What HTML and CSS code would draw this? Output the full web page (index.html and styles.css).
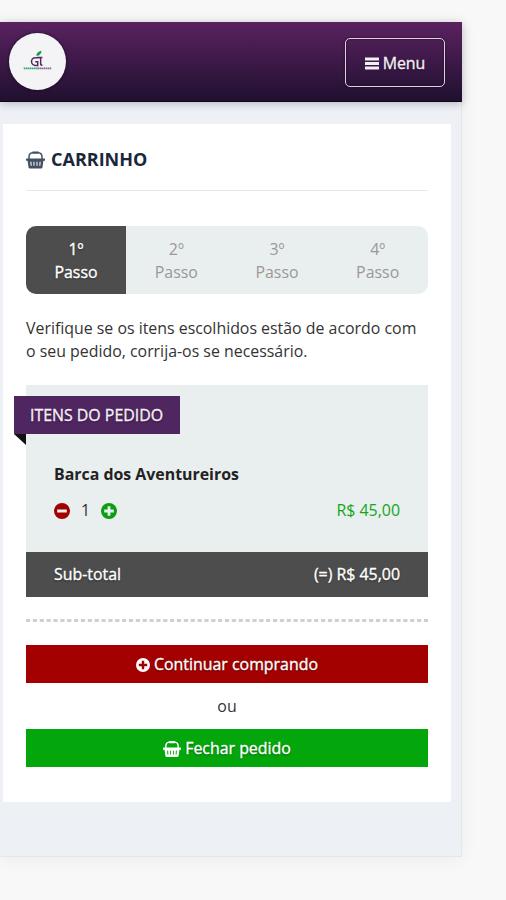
FILE: index.html
```html
<!DOCTYPE html>
<html lang="pt-BR">
<head>
<meta charset="utf-8">
<title>Carrinho</title>
<link rel="stylesheet" href="styles.css">
</head>
<body>
<svg class="defs" width="0" height="0" aria-hidden="true">
  <symbol id="basket" viewBox="0 0 19 18">
    <path d="M3 8V5.500Q3.200 2 6.500 1.700M16 8V5.500Q15.800 2 12.500 1.700" fill="none" stroke="currentColor" stroke-width="1.500"/>
    <rect x="6" y=".5" width="7" height="2.300" rx="1" fill="currentColor"/>
    <path fill="currentColor" fill-rule="evenodd" d="M.8 7.500h17.400a.8.8 0 0 1 0 2.300h-.8L16.500 16.200q-.2 1.300-1.400 1.300H3.900q-1.200 0-1.400-1.300L1.600 9.800H.8a.8.8 0 0 1 0-2.300ZM4.300 10.800l.4 4h1l-.3-4ZM7.500 10.800v4h1v-4ZM10.500 10.800v4h1v-4ZM13.600 10.800l-.3 4h1l.4-4Z"/>
  </symbol>
  <symbol id="plus" viewBox="0 0 16 16">
    <path fill="currentColor" fill-rule="evenodd" d="M8 0a8 8 0 1 0 0 16A8 8 0 0 0 8 0ZM6.600 3.200h2.800v3.400h3.400v2.800H9.400v3.400H6.600V9.400H3.200V6.600h3.400Z"/>
  </symbol>
  <symbol id="minus" viewBox="0 0 16 16">
    <path fill="currentColor" fill-rule="evenodd" d="M8 0a8 8 0 1 0 0 16A8 8 0 0 0 8 0ZM3.200 6.600h9.600v2.800H3.200Z"/>
  </symbol>
</svg>
<div class="page">
  <header class="topbar">
    <div class="logo">
      <svg viewBox="0 0 58 58" width="57" height="57">
        <path d="M28 23.500c-.5-3 1.800-5 5-5.500 0 3-1.600 5-5 5.500Z" fill="#16a34c"/>
        <path d="M31 25.200h-4.200a3.900 3.900 0 0 0 0 7.800h2.400v-3.700h-2.500M29 25h5M32.200 25.200v5.800q0 1.900 1.800 1.900" fill="none" stroke="#552860" stroke-width="1.500"/>
        <path d="M15 36h14" stroke="#31ad6b" stroke-width="2" stroke-dasharray="1.700 .4"/>
        <path d="M29 36h14" stroke="#866b91" stroke-width="1.800" stroke-dasharray="1.700 .4"/>
      </svg>
    </div>
    <button class="menu"><svg class="bars" viewBox="0 0 14 12"><path d="M0 1.500h14M0 6h14M0 10.500h14" stroke="currentColor" stroke-width="2.800"/></svg><span>Menu</span></button>
  </header>
  <main class="card">
    <h1><svg class="i-title"><use href="#basket"/></svg><span>CARRINHO</span></h1>
    <ol class="steps">
      <li class="active">1º<br>Passo</li>
      <li>2º<br>Passo</li>
      <li>3º<br>Passo</li>
      <li>4º<br>Passo</li>
    </ol>
    <p class="intro">Verifique se os itens escolhidos estão de acordo com<br>o seu pedido, corrija-os se necessário.</p>
    <section class="order">
      <h2 class="ribbon"><span>ITENS DO PEDIDO</span></h2>
      <div class="item">
        <h3>Barca dos Aventureiros</h3>
        <div class="row">
          <div class="qty"><svg class="minus"><use href="#minus"/></svg><span>1</span><svg class="plus"><use href="#plus"/></svg></div>
          <span class="price">R$ 45,00</span>
        </div>
      </div>
      <div class="subtotal"><span>Sub-total</span><span>(=) R$ 45,00</span></div>
    </section>
    <svg class="divider" width="402" height="3"><path d="M0 1.500h402" stroke="#d0d0d0" stroke-width="3" stroke-dasharray="4.200 2.660"/></svg>
    <button class="btn red"><svg class="i-plus"><use href="#plus"/></svg><span>Continuar comprando</span></button>
    <div class="or">ou</div>
    <button class="btn green"><svg class="i-basket"><use href="#basket"/></svg><span>Fechar pedido</span></button>
  </main>
</div>
</body>
</html>
```
FILE: styles.css
```css
* { box-sizing: border-box; }
body { margin: 0; padding-top: 22px; height: 900px; overflow: hidden; background: #f8f8f8; font: 15.9px/23px "Open Sans", sans-serif; color: #333; }
.defs { position: absolute; }
svg { display: block; flex: none; }
button { font: inherit; }
.page { width: 462px; height: 835px; background: #edf0f4; border-right: 1px solid #e5e7e9; border-bottom: 1px solid #e5e7e9; box-shadow: 0 2px 18px rgba(0,0,0,.055); }
.topbar { width: 462px; height: 80px; display: flex; justify-content: space-between; padding: 10px 17px 0 9px; background: linear-gradient(#5a2260, #20102f); border-bottom: 1px solid #0c0613; box-shadow: 0 2px 8px rgba(30,40,50,.25); }
.logo { width: 57px; height: 57px; margin-top: 1px; border-radius: 50%; background: #f4f3f5; box-shadow: 0 0 3px #160820; }
.menu { width: 100px; height: 49px; margin-top: 6px; display: flex; align-items: center; justify-content: center; gap: 4px; padding: 1px 0 0; background: transparent; border: 1px solid #ddd3df; border-radius: 5px; color: #f4eff5; box-shadow: 0 0 2px #1b0b24, inset 0 0 2px #1b0b24; }
.menu, .active, .ribbon, .subtotal, .btn { -webkit-text-stroke: .35px currentColor; text-shadow: 0 1px 2px rgba(0,0,0,.5); }
.bars { width: 14px; height: 13px; }
.card { width: 448px; height: 678px; margin: 22px 0 0 3px; padding: 0 23px; background: #fff; }
h1, h2, h3 { margin: 0; }
h1 { height: 67px; padding-top: 5px; display: flex; align-items: center; gap: 6px; border-bottom: 1px solid #e6e8ea; font-size: 18px; font-weight: 700; color: #1a263a; }
.i-title { width: 19px; height: 18px; color: #435061; }
.steps { list-style: none; margin: 35px 0 0; padding: 0; height: 68px; display: grid; grid-template-columns: 100px repeat(3, 1fr); border-radius: 10px; overflow: hidden; background: #e9eeef; text-align: center; color: #999; }
.steps li { padding-top: 12px; }
.steps .active { background: #4d4d4d; color: #fff; }
.intro { margin: 23px 0 0; white-space: nowrap; }
.order { margin-top: 22px; height: 212px; background: #e9eeef; display: flex; flex-direction: column; padding-top: 11px; }
.ribbon { position: relative; width: 166px; height: 38px; margin-left: -12px; padding: 8px 0 0 16px; background: #502660; color: #f4eff5; font-size: 15.9px; font-weight: 400; white-space: nowrap; }
.ribbon::after { content: ""; position: absolute; left: 0; top: 38px; border: solid transparent; border-width: 0 12px 11px 0; border-right-color: #111; }
.item { flex: 1; padding: 29px 28px 0; }
h3 { font-size: 15.9px; font-weight: 700; color: #222; }
.row { display: flex; justify-content: space-between; align-items: center; margin-top: 13px; }
.qty { display: flex; align-items: center; gap: 11px; }
.minus, .plus { width: 16px; height: 16px; color: #a30000; }
.plus { color: #0b9f0f; }
.price { color: #13a718; }
.subtotal { height: 45px; display: flex; align-items: center; justify-content: space-between; padding: 0 28px; background: #4d4d4d; color: #fff; }
.divider { margin: 22px 0; }
.btn { width: 402px; height: 38px; display: flex; align-items: center; justify-content: center; gap: 4px; padding: 1px 0 0; border: 0; color: #fff; }
.red { margin-top: 23px; background: #a30000; }
.green { background: #04a70b; }
.i-plus { width: 14px; height: 14px; }
.i-basket { width: 18px; height: 18px; }
.or { height: 46px; padding-top: 12px; text-align: center; }
```
